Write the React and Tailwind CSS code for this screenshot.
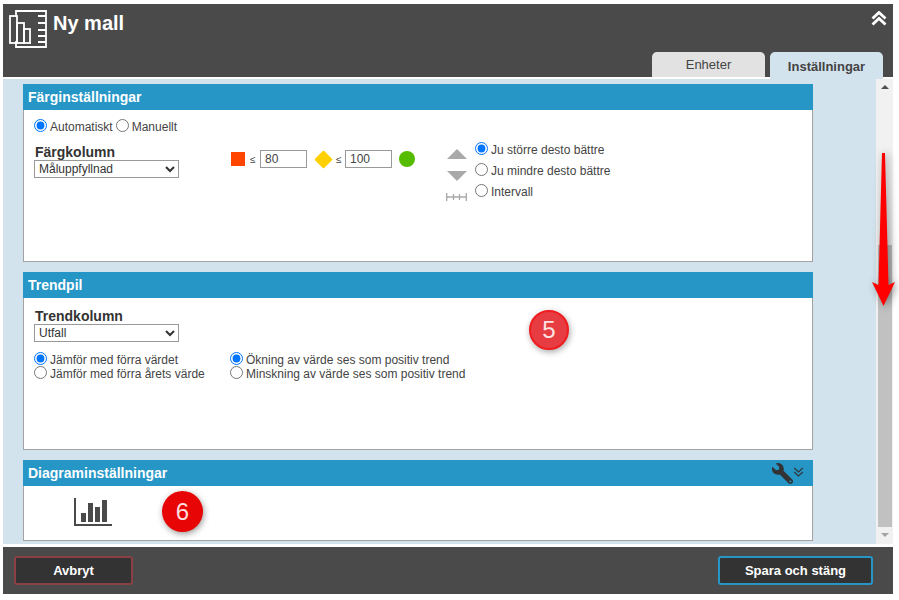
import { FaWrench } from "react-icons/fa";

function Radio({ name, checked, label, className = "" }) {
  return (
    <label className={`flex items-center gap-[3px] ${className}`}>
      <input type="radio" name={name} defaultChecked={checked} className="m-0 h-[13px] w-[13px]" />
      <span className="translate-y-[2px]">{label}</span>
    </label>
  );
}

function ColumnSelect({ title, value, options }) {
  return (
    <div className="w-[145px]">
      <div className="pl-px text-[14px] leading-[15px] font-bold text-[#333]">{title}</div>
      <select
        defaultValue={value}
        className="h-[18px] w-full border border-[#999] bg-white text-[12px] leading-none text-[#333]"
      >
        {options.map((o) => (
          <option key={o}>{o}</option>
        ))}
      </select>
    </div>
  );
}

function Panel({ title, height, action, children }) {
  return (
    <section className="flex w-[790px] flex-col" style={{ height }}>
      <header className="flex h-[26px] shrink-0 items-center justify-between bg-[#2596c6] pl-[5px] pr-[9px] text-[14px] font-bold text-white">
        {title}
        {action}
      </header>
      <div className="flex-1 border-x border-b border-[#a3a3a3] bg-white pl-[10px] text-[12px] text-[#444]">
        {children}
      </div>
    </section>
  );
}

function TemplateIcon() {
  return (
    <svg width="40" height="40" viewBox="0 0 40 40" fill="none" stroke="white" strokeWidth="1.8" className="shrink-0">
      <path d="M7 7V1h30v36H7v-6" />
      <rect x="1" y="6" width="7" height="27" />
      <rect x="8" y="13" width="7" height="20" />
      <rect x="15" y="19" width="6" height="14" />
      <path d="M21 33h1M29 6h8M29 13h8M29 20h8M29 26h8M29 32h8" />
    </svg>
  );
}

function DoubleChevron({ className, stroke, width = 2.8 }) {
  return (
    <svg viewBox="0 0 16 15" fill="none" stroke={stroke} strokeWidth={width} className={className}>
      <path d="M1.5 7.5 8 1.5l6.5 6M1.5 13.5 8 7.5l6.5 6" />
    </svg>
  );
}

function Badge({ children, className }) {
  return (
    <div
      className={`absolute flex items-center justify-center rounded-full text-[24px] leading-none ${className}`}
    >
      {children}
    </div>
  );
}

export default function App() {
  return (
    <div className="relative h-[600px] w-[899px] overflow-hidden bg-white pl-[3px] pr-[6px] pt-[4px] font-['Liberation_Sans',Arial,sans-serif]">
      {/* title bar */}
      <div className="flex h-[73px] justify-between bg-[#4a4a4a] pl-[6px] pr-[10px]">
        <div className="flex items-start gap-[4px] pt-[6px]">
          <TemplateIcon />
          <h1 className="text-[20px] leading-[26px] font-bold text-white">Ny mall</h1>
        </div>
        <div className="flex flex-col items-end justify-between">
          <DoubleChevron className="mt-[7px] mr-[-4px] h-[15px] w-[16px]" stroke="white" />
          <div className="flex items-start gap-[5px]">
            <div className="flex h-[25px] w-[113px] items-center justify-center rounded-t-[5px] bg-[#e2e2e2] text-[13px] text-[#444]">
              Enheter
            </div>
            <div className="z-10 -mb-[2px] flex h-[27px] w-[113px] items-start justify-center rounded-t-[5px] bg-[#d2e3ee] pt-[5px] text-[13px] font-bold text-[#444]">
              Inställningar
            </div>
          </div>
        </div>
      </div>

      {/* scrollable settings area */}
      <div className="mt-[2px] flex h-[465px]">
        <main className="flex w-[873px] flex-col gap-[10px] bg-[#d2e3ee] pl-[20px] pt-[5px]">
          <Panel title="Färginställningar" height={178}>
            <div className="flex gap-[3px] pt-[8px] leading-[14px]">
              <Radio name="mode" checked label="Automatiskt" />
              <Radio name="mode" label="Manuellt" />
            </div>
            <div className="mt-[13px] flex items-start">
              <ColumnSelect
                title="Färgkolumn"
                value="Måluppfyllnad"
                options={["Måluppfyllnad", "Utfall"]}
              />
              <div className="ml-[52px] mt-[5px] flex h-[18px] items-center">
                <span className="h-[14px] w-[14px] bg-[#ff4500]" />
                <span className="ml-[5px] w-[10px] text-[10px]">≤</span>
                <input
                  defaultValue="80"
                  className="h-[18px] w-[47px] border border-[#999] pl-[4px] text-[12px] text-[#444]"
                />
                <span className="ml-[10px] h-[13px] w-[13px] rotate-45 rounded-[1px] bg-[#ffd000]" />
                <span className="ml-[6px] w-[9px] text-[10px]">≤</span>
                <input
                  defaultValue="100"
                  className="h-[18px] w-[47px] border border-[#999] pl-[4px] text-[12px] text-[#444]"
                />
                <span className="ml-[7px] h-[16px] w-[16px] rounded-full bg-[#56bc00]" />
              </div>
              <div className="ml-[31px] mt-[4px] flex w-[21px] flex-col items-center">
                <span className="h-0 w-0 border-x-[10px] border-b-[10px] border-x-transparent border-b-[#a9a9a9]" />
                <span className="mt-[12px] h-0 w-0 border-x-[10px] border-t-[10px] border-x-transparent border-t-[#a9a9a9]" />
                <svg width="21" height="8" viewBox="0 0 21 8" stroke="#a9a9a9" strokeWidth="1.3" className="mt-[12px]">
                  <path d="M.7 0v8M7.5 1v6M13.5 1v6M20.3 0v8M0 4h21" />
                </svg>
              </div>
              <div className="-mt-[4px] ml-[8px] flex flex-col gap-[7px] leading-[14px]">
                <Radio name="dir" checked label="Ju större desto bättre" />
                <Radio name="dir" label="Ju mindre desto bättre" />
                <Radio name="dir" label="Intervall" />
              </div>
            </div>
          </Panel>

          <Panel title="Trendpil" height={178}>
            <div className="pt-[11px]">
              <ColumnSelect title="Trendkolumn" value="Utfall" options={["Utfall", "Måluppfyllnad"]} />
            </div>
            <div className="mt-[9px] flex gap-[25px] leading-[14px]">
              <div className="w-[171px]">
                <Radio name="cmp" checked label="Jämför med förra värdet" />
                <Radio name="cmp" label="Jämför med förra årets värde" />
              </div>
              <div>
                <Radio name="trend" checked label="Ökning av värde ses som positiv trend" />
                <Radio name="trend" label="Minskning av värde ses som positiv trend" />
              </div>
            </div>
          </Panel>

          <Panel
            title="Diagraminställningar"
            height={81}
            action={
              <div className="flex items-center">
                <FaWrench className="h-[21px] w-[21px] -scale-x-100 text-[#333]" />
                <DoubleChevron className="-mt-[3px] h-[10px] w-[11px] rotate-180" stroke="#333" width={1.6} />
              </div>
            }
          >
            <svg width="38" height="28" viewBox="0 0 38 28" fill="#4a4a4a" className="ml-[40px] mt-[12px]">
              <path d="M0 0h2v26h36v2H0z" />
              <rect x="7" y="15" width="5" height="9" />
              <rect x="14" y="5" width="5" height="19" />
              <rect x="21" y="9" width="5" height="15" />
              <rect x="28" y="2" width="5" height="22" />
            </svg>
          </Panel>
        </main>

        {/* scrollbar */}
        <div className="flex w-[17px] flex-col items-center bg-[#f1f1f1]">
          <span className="mt-[6px] h-0 w-0 border-x-[4px] border-b-[4px] border-x-transparent border-b-[#505050]" />
          <div className="mt-[156px] h-[282px] w-[14px] bg-[#c1c1c1]" />
          <span className="mt-[6px] h-0 w-0 border-x-[4px] border-t-[4px] border-x-transparent border-t-[#a3a3a3]" />
        </div>
      </div>

      {/* footer */}
      <div className="mt-[3px] flex h-[47px] items-center justify-between bg-[#4a4a4a] pl-[11px] pr-[20px]">
        <button className="h-[29px] w-[119px] rounded-[3px] border-2 border-[#8a4044] bg-[#333] text-[13px] font-bold text-white">
          Avbryt
        </button>
        <button className="h-[29px] w-[155px] rounded-[3px] border-2 border-[#2596c6] bg-[#333] text-[13px] font-bold text-white">
          Spara och stäng
        </button>
      </div>

      {/* annotations on top of the screenshot */}
      <Badge className="left-[529px] top-[310px] h-[40px] w-[40px] border-2 border-[#f01c1f] bg-[#e63c42] text-[#fde3e3] shadow-[1px_2px_6px_rgba(0,0,0,0.35)]">
        5
      </Badge>
      <Badge className="left-[162px] top-[491px] h-[41px] w-[41px] bg-[#e80505] text-[#fbdcdc] shadow-[1px_2px_6px_rgba(0,0,0,0.4)]">
        6
      </Badge>
      <svg
        width="26"
        height="156"
        viewBox="0 0 26 156"
        className="absolute left-[871px] top-[152px] drop-shadow-[2px_1px_4px_rgba(0,0,0,0.45)]"
      >
        <polygon points="11,1 14,1 17.5,133 24,130 12.5,154 1,130 7.5,133" fill="#ff0000" />
      </svg>
    </div>
  );
}
